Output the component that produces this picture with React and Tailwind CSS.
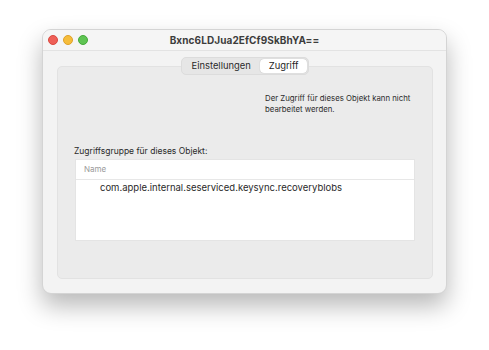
import React from 'react';

const font = { fontFamily: 'Inter, "Liberation Sans", sans-serif' };

function TrafficLights() {
  return (
    <div className="flex items-center gap-[5px]">
      <span className="w-[10px] h-[10px] rounded-full bg-[#ee5f57] border border-[#d9493f]" />
      <span className="w-[10px] h-[10px] rounded-full bg-[#f6bd3b] border border-[#dea02a]" />
      <span className="w-[10px] h-[10px] rounded-full bg-[#5fc453] border border-[#45a93a]" />
    </div>
  );
}

export default function App() {
  return (
    <div className="w-[489px] h-[350px] bg-white overflow-hidden" style={font}>
      <div className="ml-[42px] mt-[29px] w-[405px] h-[265px] rounded-[9px] bg-[#f3f3f3] border border-[#d4d4d4] shadow-[0_12px_24px_rgba(0,0,0,0.28)] flex flex-col overflow-hidden">
        {/* title bar */}
        <div className="relative h-[21px] flex items-center justify-center border-b border-[#e3e3e3] bg-[#f5f5f5]">
          <div className="absolute left-[5px] top-[5px]">
            <TrafficLights />
          </div>
          <span className="text-[10px] font-bold text-[#3c3c3c] tracking-[0.1px]">Bxnc6LDJua2EfCf9SkBhYA==</span>
        </div>

        {/* body */}
        <div className="flex-1 flex flex-col pt-[6px] pl-[14px] pr-[13px] pb-[14px]">
          <div className="relative z-10 self-center -mb-[9px] flex items-center h-[18px] rounded-[5px] bg-[#e6e6e6] border border-[#dcdcdc] p-[1px]">
            <div className="px-[9px] text-[9.4px] text-[#2a2a2a]">Einstellungen</div>
            <div className="px-[9px] h-[14px] flex items-center rounded-[4px] bg-white shadow-[0_0_1px_rgba(0,0,0,0.3)] text-[9.4px] text-[#1e1e1e]">Zugriff</div>
          </div>

          <div className="flex-1 rounded-[5px] bg-[#ebebeb] border border-[#e2e2e2] flex flex-col">
            <div className="pl-[207px] pt-[26px] text-[7.8px] leading-[11px] text-[#2c2c2c] whitespace-nowrap">
              <div>Der Zugriff für dieses Objekt kann nicht</div>
              <div>bearbeitet werden.</div>
            </div>

            <div className="pl-[16px] pt-[30px] text-[8.5px] text-[#2a2a2a]">Zugriffsgruppe für dieses Objekt:</div>

            <div className="mx-[17px] mt-[1px] h-[82px] bg-white border border-[#e4e4e4]">
              <div className="h-[20px] flex items-center pl-[8px] border-b border-[#e7e7e7] text-[8px] text-[#9a9a9a]">Name</div>
              <div className="h-[17px] flex items-center pl-[24px] text-[9.5px] text-[#2a2a2a]">com.apple.internal.seserviced.keysync.recoveryblobs</div>
            </div>
          </div>
        </div>
      </div>
    </div>
  );
}
